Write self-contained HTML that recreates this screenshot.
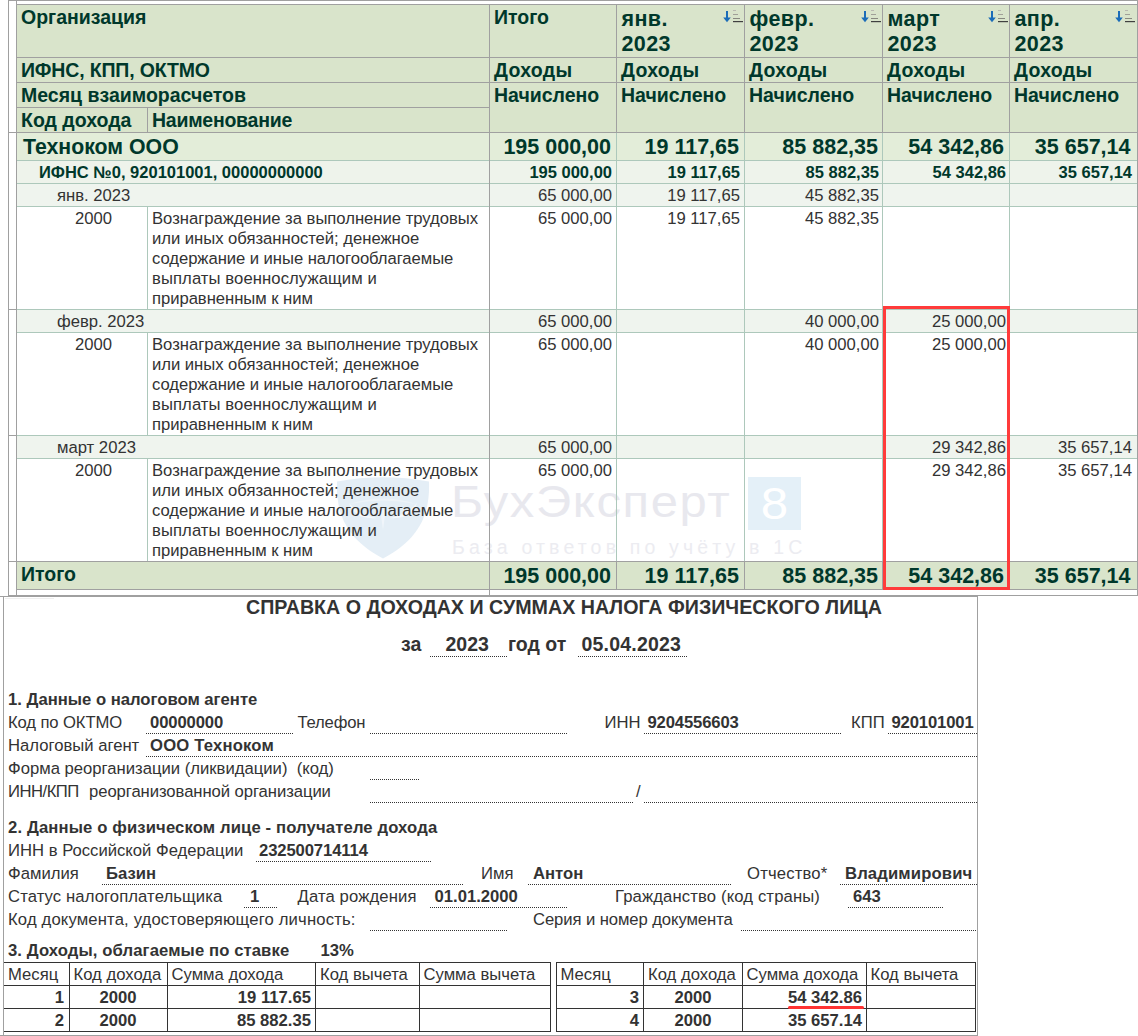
<!DOCTYPE html>
<html><head><meta charset="utf-8"><style>
html,body{margin:0;padding:0;background:#fff;width:1138px;height:1036px;overflow:hidden;position:relative}
body>div,body>svg{position:absolute;box-sizing:content-box}
.t{font-family:"Liberation Sans", sans-serif;white-space:nowrap}
</style></head><body>
<div style="left:8px;top:0px;width:1130px;height:1px;background:#a0a0a0"></div>
<div style="left:8px;top:0px;width:1px;height:596px;background:#a0a0a0"></div>
<div style="left:1137px;top:0px;width:1px;height:596px;background:#a0a0a0"></div>
<div style="left:17px;top:5px;width:1120px;height:127px;background:#d9e4cb"></div>
<div style="left:16px;top:4px;width:1121px;height:1px;background:#a0a0a0"></div>
<div style="left:16px;top:57px;width:1121px;height:1px;background:#a0a0a0"></div>
<div style="left:16px;top:82px;width:1121px;height:1px;background:#a0a0a0"></div>
<div style="left:16px;top:107px;width:473px;height:1px;background:#a0a0a0"></div>
<div style="left:8px;top:132px;width:1129px;height:1px;background:#a0a0a0"></div>
<div style="left:16px;top:0px;width:1px;height:596px;background:#a0a0a0"></div>
<div style="left:489px;top:4px;width:1px;height:129px;background:#a0a0a0"></div>
<div style="left:616px;top:4px;width:1px;height:129px;background:#a0a0a0"></div>
<div style="left:744px;top:4px;width:1px;height:129px;background:#a0a0a0"></div>
<div style="left:882px;top:4px;width:1px;height:129px;background:#a0a0a0"></div>
<div style="left:1009px;top:4px;width:1px;height:129px;background:#a0a0a0"></div>
<div style="left:147px;top:107px;width:1px;height:26px;background:#a0a0a0"></div>
<div style="left:17px;top:133px;width:1120px;height:27px;background:#e3edd9"></div>
<div style="left:17px;top:161px;width:1120px;height:22px;background:#eef3eb"></div>
<div style="left:17px;top:184px;width:1120px;height:22px;background:#eff4ee"></div>
<div style="left:17px;top:207px;width:1120px;height:102px;background:#fff"></div>
<div style="left:17px;top:310px;width:1120px;height:22px;background:#eff4ee"></div>
<div style="left:17px;top:333px;width:1120px;height:102px;background:#fff"></div>
<div style="left:17px;top:436px;width:1120px;height:22px;background:#eff4ee"></div>
<div style="left:17px;top:459px;width:1120px;height:102px;background:#fff"></div>
<svg style="left:336px;top:476px" width="96" height="86" viewBox="0 0 96 86"><path d="M1 5.6 Q47 -3 93 5.6 C94 35 86 62 47 82.5 C8 62 0 35 1 5.6 Z" fill="#e4eef6"/><path d="M13 27 Q19 44 41 42 Q23 39 13 27 Z" fill="#f5f9fc"/><path d="M81 27 Q75 44 53 42 Q71 39 81 27 Z" fill="#f5f9fc"/><path d="M14 28 Q47 17 80 28 Q47 21 14 28 Z" fill="#edf3f8"/><path d="M44.5 36 Q47 30 49.5 36 L47 54 Z" fill="#f0f5fa"/></svg>
<div class="t" style="left:451px;top:472px;font-size:44.5px;line-height:60px;letter-spacing:1.5px;color:#e8e8ee;transform:scaleX(1.1);transform-origin:0 0">БухЭксперт</div>
<div style="left:748px;top:477px;width:53px;height:53px;background:#e4f0f8"></div>
<div class="t" style="left:748px;top:474px;width:53px;text-align:center;font-size:44px;line-height:60px;color:#fff;transform:scaleX(1.12)">8</div>
<div class="t" style="left:452px;top:537px;font-size:19.5px;line-height:20px;letter-spacing:4.16px;color:#ececf1">База ответов по учёту в 1С</div>
<div style="left:17px;top:160px;width:1120px;height:1px;background:#adc8bb"></div>
<div style="left:17px;top:183px;width:1120px;height:1px;background:#adc8bb"></div>
<div style="left:17px;top:206px;width:1120px;height:1px;background:#adc8bb"></div>
<div style="left:17px;top:309px;width:1120px;height:1px;background:#adc8bb"></div>
<div style="left:17px;top:332px;width:1120px;height:1px;background:#adc8bb"></div>
<div style="left:17px;top:435px;width:1120px;height:1px;background:#adc8bb"></div>
<div style="left:17px;top:458px;width:1120px;height:1px;background:#adc8bb"></div>
<div style="left:8px;top:309px;width:9px;height:1px;background:#a0a0a0"></div>
<div style="left:8px;top:435px;width:9px;height:1px;background:#a0a0a0"></div>
<div style="left:616px;top:133px;width:1px;height:428px;background:#adc8bb"></div>
<div style="left:744px;top:133px;width:1px;height:428px;background:#adc8bb"></div>
<div style="left:882px;top:133px;width:1px;height:428px;background:#adc8bb"></div>
<div style="left:1009px;top:133px;width:1px;height:428px;background:#adc8bb"></div>
<div style="left:489px;top:133px;width:1px;height:428px;background:#a0a0a0"></div>
<div style="left:147px;top:207px;width:1px;height:102px;background:#adc8bb"></div>
<div style="left:147px;top:333px;width:1px;height:102px;background:#adc8bb"></div>
<div style="left:147px;top:459px;width:1px;height:102px;background:#adc8bb"></div>
<div style="left:17px;top:562px;width:1120px;height:27px;background:#d9e4cb"></div>
<div style="left:8px;top:561px;width:1129px;height:1px;background:#a0a0a0"></div>
<div style="left:16px;top:589px;width:1121px;height:1px;background:#a0a0a0"></div>
<div style="left:489px;top:562px;width:1px;height:27px;background:#a0a0a0"></div>
<div style="left:616px;top:562px;width:1px;height:27px;background:#a0a0a0"></div>
<div style="left:744px;top:562px;width:1px;height:27px;background:#a0a0a0"></div>
<div style="left:882px;top:562px;width:1px;height:27px;background:#a0a0a0"></div>
<div style="left:1009px;top:562px;width:1px;height:27px;background:#a0a0a0"></div>
<div style="left:489px;top:590px;width:1px;height:5px;background:#a0a0a0"></div>
<div style="left:8px;top:595px;width:1130px;height:1px;background:#a0a0a0"></div>
<div style="left:0px;top:596px;width:978px;height:1px;background:#a0a0a0"></div>
<div style="left:5px;top:598px;width:49px;height:1px;background:#efefef"></div>
<div class="t" style="left:21px;top:8.49px;font-size:19.5px;line-height:19.5px;font-weight:bold;color:#00382b;">Организация</div>
<div class="t" style="left:494px;top:8.49px;font-size:19.5px;line-height:19.5px;font-weight:bold;color:#00382b;">Итого</div>
<div class="t" style="left:621.5px;top:8.80px;font-size:21.5px;line-height:21.5px;font-weight:bold;color:#00382b;letter-spacing:0.4px">янв.</div>
<div class="t" style="left:621.5px;top:33.80px;font-size:21.5px;line-height:21.5px;font-weight:bold;color:#00382b;letter-spacing:0.4px">2023</div>
<div class="t" style="left:749.5px;top:8.80px;font-size:21.5px;line-height:21.5px;font-weight:bold;color:#00382b;letter-spacing:0.4px">февр.</div>
<div class="t" style="left:749.5px;top:33.80px;font-size:21.5px;line-height:21.5px;font-weight:bold;color:#00382b;letter-spacing:0.4px">2023</div>
<div class="t" style="left:887.5px;top:8.80px;font-size:21.5px;line-height:21.5px;font-weight:bold;color:#00382b;letter-spacing:0.4px">март</div>
<div class="t" style="left:887.5px;top:33.80px;font-size:21.5px;line-height:21.5px;font-weight:bold;color:#00382b;letter-spacing:0.4px">2023</div>
<div class="t" style="left:1014.5px;top:8.80px;font-size:21.5px;line-height:21.5px;font-weight:bold;color:#00382b;letter-spacing:0.4px">апр.</div>
<div class="t" style="left:1014.5px;top:33.80px;font-size:21.5px;line-height:21.5px;font-weight:bold;color:#00382b;letter-spacing:0.4px">2023</div>
<div class="t" style="left:21px;top:61.49px;font-size:19.5px;line-height:19.5px;font-weight:bold;color:#00382b;letter-spacing:-0.16px">ИФНС, КПП, ОКТМО</div>
<div class="t" style="left:21px;top:86.49px;font-size:19.5px;line-height:19.5px;font-weight:bold;color:#00382b;">Месяц взаиморасчетов</div>
<div class="t" style="left:21px;top:111.49px;font-size:19.5px;line-height:19.5px;font-weight:bold;color:#00382b;">Код дохода</div>
<div class="t" style="left:152px;top:111.49px;font-size:19.5px;line-height:19.5px;font-weight:bold;color:#00382b;letter-spacing:-0.25px">Наименование</div>
<div class="t" style="left:494px;top:61.49px;font-size:19.5px;line-height:19.5px;font-weight:bold;color:#00382b;letter-spacing:0.3px">Доходы</div>
<div class="t" style="left:494px;top:86.49px;font-size:19.5px;line-height:19.5px;font-weight:bold;color:#00382b;">Начислено</div>
<div class="t" style="left:621px;top:61.49px;font-size:19.5px;line-height:19.5px;font-weight:bold;color:#00382b;letter-spacing:0.3px">Доходы</div>
<div class="t" style="left:621px;top:86.49px;font-size:19.5px;line-height:19.5px;font-weight:bold;color:#00382b;">Начислено</div>
<div class="t" style="left:749px;top:61.49px;font-size:19.5px;line-height:19.5px;font-weight:bold;color:#00382b;letter-spacing:0.3px">Доходы</div>
<div class="t" style="left:749px;top:86.49px;font-size:19.5px;line-height:19.5px;font-weight:bold;color:#00382b;">Начислено</div>
<div class="t" style="left:887px;top:61.49px;font-size:19.5px;line-height:19.5px;font-weight:bold;color:#00382b;letter-spacing:0.3px">Доходы</div>
<div class="t" style="left:887px;top:86.49px;font-size:19.5px;line-height:19.5px;font-weight:bold;color:#00382b;">Начислено</div>
<div class="t" style="left:1014px;top:61.49px;font-size:19.5px;line-height:19.5px;font-weight:bold;color:#00382b;letter-spacing:0.3px">Доходы</div>
<div class="t" style="left:1014px;top:86.49px;font-size:19.5px;line-height:19.5px;font-weight:bold;color:#00382b;">Начислено</div>
<svg style="position:absolute;left:723px;top:9px" width="22" height="14" viewBox="0 0 22 14"><rect x="3" y="2" width="2" height="8" fill="#1b6cb8"/><path d="M0.2 8.5 L4 13.2 L7.8 8.5 Z" fill="#1b6cb8"/><rect x="10" y="1" width="3" height="1" fill="#b8b8b0"/><rect x="10" y="5" width="5" height="1" fill="#a0a098"/><rect x="10" y="9" width="7" height="1" fill="#888880"/><rect x="10" y="12" width="10" height="1.2" fill="#404040"/></svg>
<svg style="position:absolute;left:861px;top:9px" width="22" height="14" viewBox="0 0 22 14"><rect x="3" y="2" width="2" height="8" fill="#1b6cb8"/><path d="M0.2 8.5 L4 13.2 L7.8 8.5 Z" fill="#1b6cb8"/><rect x="10" y="1" width="3" height="1" fill="#b8b8b0"/><rect x="10" y="5" width="5" height="1" fill="#a0a098"/><rect x="10" y="9" width="7" height="1" fill="#888880"/><rect x="10" y="12" width="10" height="1.2" fill="#404040"/></svg>
<svg style="position:absolute;left:988px;top:9px" width="22" height="14" viewBox="0 0 22 14"><rect x="3" y="2" width="2" height="8" fill="#1b6cb8"/><path d="M0.2 8.5 L4 13.2 L7.8 8.5 Z" fill="#1b6cb8"/><rect x="10" y="1" width="3" height="1" fill="#b8b8b0"/><rect x="10" y="5" width="5" height="1" fill="#a0a098"/><rect x="10" y="9" width="7" height="1" fill="#888880"/><rect x="10" y="12" width="10" height="1.2" fill="#404040"/></svg>
<svg style="position:absolute;left:1115px;top:9px" width="22" height="14" viewBox="0 0 22 14"><rect x="3" y="2" width="2" height="8" fill="#1b6cb8"/><path d="M0.2 8.5 L4 13.2 L7.8 8.5 Z" fill="#1b6cb8"/><rect x="10" y="1" width="3" height="1" fill="#b8b8b0"/><rect x="10" y="5" width="5" height="1" fill="#a0a098"/><rect x="10" y="9" width="7" height="1" fill="#888880"/><rect x="10" y="12" width="10" height="1.2" fill="#404040"/></svg>
<div class="t" style="left:23px;top:136.97px;font-size:21.3px;line-height:21.3px;font-weight:bold;color:#00382b;">Техноком ООО</div>
<div class="t" style="right:527px;top:136.80px;font-size:21.5px;line-height:21.5px;font-weight:bold;color:#00382b;">195 000,00</div>
<div class="t" style="right:399px;top:136.80px;font-size:21.5px;line-height:21.5px;font-weight:bold;color:#00382b;">19 117,65</div>
<div class="t" style="right:260px;top:136.80px;font-size:21.5px;line-height:21.5px;font-weight:bold;color:#00382b;">85 882,35</div>
<div class="t" style="right:134px;top:136.80px;font-size:21.5px;line-height:21.5px;font-weight:bold;color:#00382b;">54 342,86</div>
<div class="t" style="right:7.5px;top:136.80px;font-size:21.5px;line-height:21.5px;font-weight:bold;color:#00382b;">35 657,14</div>
<div class="t" style="left:39px;top:164.03px;font-size:16.5px;line-height:16.5px;font-weight:bold;color:#00382b;">ИФНС №0, 920101001, 00000000000</div>
<div class="t" style="right:526px;top:164.03px;font-size:16.5px;line-height:16.5px;font-weight:bold;color:#00382b;">195 000,00</div>
<div class="t" style="right:398px;top:164.03px;font-size:16.5px;line-height:16.5px;font-weight:bold;color:#00382b;">19 117,65</div>
<div class="t" style="right:259px;top:164.03px;font-size:16.5px;line-height:16.5px;font-weight:bold;color:#00382b;">85 882,35</div>
<div class="t" style="right:132px;top:164.03px;font-size:16.5px;line-height:16.5px;font-weight:bold;color:#00382b;">54 342,86</div>
<div class="t" style="right:6px;top:164.03px;font-size:16.5px;line-height:16.5px;font-weight:bold;color:#00382b;">35 657,14</div>
<div class="t" style="left:57px;top:187.89px;font-size:16.67px;line-height:16.67px;font-weight:normal;color:#333333;">янв. 2023</div>
<div class="t" style="right:526px;top:187.89px;font-size:16.67px;line-height:16.67px;font-weight:normal;color:#333333;">65 000,00</div>
<div class="t" style="right:398px;top:187.89px;font-size:16.67px;line-height:16.67px;font-weight:normal;color:#333333;">19 117,65</div>
<div class="t" style="right:259px;top:187.89px;font-size:16.67px;line-height:16.67px;font-weight:normal;color:#333333;">45 882,35</div>
<div class="t" style="left:75px;top:210.89px;font-size:16.67px;line-height:16.67px;font-weight:normal;color:#333333;">2000</div>
<div class="t" style="left:152px;top:210.89px;font-size:16.67px;line-height:16.67px;font-weight:normal;color:#333333;letter-spacing:-0.02px">Вознаграждение за выполнение трудовых</div>
<div class="t" style="left:152px;top:230.89px;font-size:16.67px;line-height:16.67px;font-weight:normal;color:#333333;letter-spacing:-0.03px">или иных обязанностей; денежное</div>
<div class="t" style="left:152px;top:250.89px;font-size:16.67px;line-height:16.67px;font-weight:normal;color:#333333;letter-spacing:-0.06px">содержание и иные налогооблагаемые</div>
<div class="t" style="left:152px;top:270.89px;font-size:16.67px;line-height:16.67px;font-weight:normal;color:#333333;letter-spacing:0.08px">выплаты военнослужащим и</div>
<div class="t" style="left:152px;top:290.89px;font-size:16.67px;line-height:16.67px;font-weight:normal;color:#333333;letter-spacing:-0.05px">приравненным к ним</div>
<div class="t" style="right:526px;top:210.89px;font-size:16.67px;line-height:16.67px;font-weight:normal;color:#333333;">65 000,00</div>
<div class="t" style="right:398px;top:210.89px;font-size:16.67px;line-height:16.67px;font-weight:normal;color:#333333;">19 117,65</div>
<div class="t" style="right:259px;top:210.89px;font-size:16.67px;line-height:16.67px;font-weight:normal;color:#333333;">45 882,35</div>
<div class="t" style="left:57px;top:313.89px;font-size:16.67px;line-height:16.67px;font-weight:normal;color:#333333;">февр. 2023</div>
<div class="t" style="right:526px;top:313.89px;font-size:16.67px;line-height:16.67px;font-weight:normal;color:#333333;">65 000,00</div>
<div class="t" style="right:259px;top:313.89px;font-size:16.67px;line-height:16.67px;font-weight:normal;color:#333333;">40 000,00</div>
<div class="t" style="right:132px;top:313.89px;font-size:16.67px;line-height:16.67px;font-weight:normal;color:#333333;">25 000,00</div>
<div class="t" style="left:75px;top:336.89px;font-size:16.67px;line-height:16.67px;font-weight:normal;color:#333333;">2000</div>
<div class="t" style="left:152px;top:336.89px;font-size:16.67px;line-height:16.67px;font-weight:normal;color:#333333;letter-spacing:-0.02px">Вознаграждение за выполнение трудовых</div>
<div class="t" style="left:152px;top:356.89px;font-size:16.67px;line-height:16.67px;font-weight:normal;color:#333333;letter-spacing:-0.03px">или иных обязанностей; денежное</div>
<div class="t" style="left:152px;top:376.89px;font-size:16.67px;line-height:16.67px;font-weight:normal;color:#333333;letter-spacing:-0.06px">содержание и иные налогооблагаемые</div>
<div class="t" style="left:152px;top:396.89px;font-size:16.67px;line-height:16.67px;font-weight:normal;color:#333333;letter-spacing:0.08px">выплаты военнослужащим и</div>
<div class="t" style="left:152px;top:416.89px;font-size:16.67px;line-height:16.67px;font-weight:normal;color:#333333;letter-spacing:-0.05px">приравненным к ним</div>
<div class="t" style="right:526px;top:336.89px;font-size:16.67px;line-height:16.67px;font-weight:normal;color:#333333;">65 000,00</div>
<div class="t" style="right:259px;top:336.89px;font-size:16.67px;line-height:16.67px;font-weight:normal;color:#333333;">40 000,00</div>
<div class="t" style="right:132px;top:336.89px;font-size:16.67px;line-height:16.67px;font-weight:normal;color:#333333;">25 000,00</div>
<div class="t" style="left:57px;top:439.89px;font-size:16.67px;line-height:16.67px;font-weight:normal;color:#333333;">март 2023</div>
<div class="t" style="right:526px;top:439.89px;font-size:16.67px;line-height:16.67px;font-weight:normal;color:#333333;">65 000,00</div>
<div class="t" style="right:132px;top:439.89px;font-size:16.67px;line-height:16.67px;font-weight:normal;color:#333333;">29 342,86</div>
<div class="t" style="right:6px;top:439.89px;font-size:16.67px;line-height:16.67px;font-weight:normal;color:#333333;">35 657,14</div>
<div class="t" style="left:75px;top:462.89px;font-size:16.67px;line-height:16.67px;font-weight:normal;color:#333333;">2000</div>
<div class="t" style="left:152px;top:462.89px;font-size:16.67px;line-height:16.67px;font-weight:normal;color:#333333;letter-spacing:-0.02px">Вознаграждение за выполнение трудовых</div>
<div class="t" style="left:152px;top:482.89px;font-size:16.67px;line-height:16.67px;font-weight:normal;color:#333333;letter-spacing:-0.03px">или иных обязанностей; денежное</div>
<div class="t" style="left:152px;top:502.89px;font-size:16.67px;line-height:16.67px;font-weight:normal;color:#333333;letter-spacing:-0.06px">содержание и иные налогооблагаемые</div>
<div class="t" style="left:152px;top:522.89px;font-size:16.67px;line-height:16.67px;font-weight:normal;color:#333333;letter-spacing:0.08px">выплаты военнослужащим и</div>
<div class="t" style="left:152px;top:542.89px;font-size:16.67px;line-height:16.67px;font-weight:normal;color:#333333;letter-spacing:-0.05px">приравненным к ним</div>
<div class="t" style="right:526px;top:462.89px;font-size:16.67px;line-height:16.67px;font-weight:normal;color:#333333;">65 000,00</div>
<div class="t" style="right:132px;top:462.89px;font-size:16.67px;line-height:16.67px;font-weight:normal;color:#333333;">29 342,86</div>
<div class="t" style="right:6px;top:462.89px;font-size:16.67px;line-height:16.67px;font-weight:normal;color:#333333;">35 657,14</div>
<div class="t" style="left:21px;top:565.49px;font-size:19.5px;line-height:19.5px;font-weight:bold;color:#00382b;">Итого</div>
<div class="t" style="right:527px;top:565.80px;font-size:21.5px;line-height:21.5px;font-weight:bold;color:#00382b;">195 000,00</div>
<div class="t" style="right:399px;top:565.80px;font-size:21.5px;line-height:21.5px;font-weight:bold;color:#00382b;">19 117,65</div>
<div class="t" style="right:260px;top:565.80px;font-size:21.5px;line-height:21.5px;font-weight:bold;color:#00382b;">85 882,35</div>
<div class="t" style="right:134px;top:565.80px;font-size:21.5px;line-height:21.5px;font-weight:bold;color:#00382b;">54 342,86</div>
<div class="t" style="right:7.5px;top:565.80px;font-size:21.5px;line-height:21.5px;font-weight:bold;color:#00382b;">35 657,14</div>
<div style="left:883px;top:306px;width:121px;height:278px;border:3px solid #ff3b3b"></div>
<div style="left:3px;top:597px;width:1px;height:439px;background:#a0a0a0"></div>
<div style="left:977px;top:597px;width:1px;height:439px;background:#a0a0a0"></div>
<div style="left:0px;top:1035px;width:978px;height:1px;background:#a0a0a0"></div>
<div class="t" style="left:246px;top:598.35px;font-size:19.67px;line-height:19.67px;font-weight:bold;color:#333333;">СПРАВКА О ДОХОДАХ И СУММАХ НАЛОГА ФИЗИЧЕСКОГО ЛИЦА</div>
<div class="t" style="left:401px;top:635.49px;font-size:19.5px;line-height:19.5px;font-weight:bold;color:#333333;">за</div>
<div class="t" style="left:445.5px;top:635.49px;font-size:19.5px;line-height:19.5px;font-weight:bold;color:#333333;">2023</div>
<div class="t" style="left:508px;top:635.49px;font-size:19.5px;line-height:19.5px;font-weight:bold;color:#333333;">год от</div>
<div class="t" style="left:581.5px;top:635.49px;font-size:19.5px;line-height:19.5px;font-weight:bold;color:#333333;letter-spacing:0.2px">05.04.2023</div>
<div style="left:430px;top:656px;width:78px;height:1px;background:repeating-linear-gradient(to right,#333 0 1px,transparent 1px 2px)"></div>
<div style="left:578px;top:656px;width:109px;height:1px;background:repeating-linear-gradient(to right,#333 0 1px,transparent 1px 2px)"></div>
<div class="t" style="left:8px;top:691.89px;font-size:16.67px;line-height:16.67px;font-weight:bold;color:#333333;">1. Данные о налоговом агенте</div>
<div class="t" style="left:8px;top:714.89px;font-size:16.67px;line-height:16.67px;font-weight:normal;color:#333333;letter-spacing:-0.12px">Код по ОКТМО</div>
<div class="t" style="left:150px;top:714.89px;font-size:16.67px;line-height:16.67px;font-weight:bold;color:#333333;letter-spacing:-0.13px">00000000</div>
<div style="left:146px;top:733px;width:148px;height:1px;background:repeating-linear-gradient(to right,#333 0 1px,transparent 1px 2px)"></div>
<div class="t" style="left:297.5px;top:714.89px;font-size:16.67px;line-height:16.67px;font-weight:normal;color:#333333;letter-spacing:-0.2px">Телефон</div>
<div style="left:370px;top:733px;width:198px;height:1px;background:repeating-linear-gradient(to right,#333 0 1px,transparent 1px 2px)"></div>
<div class="t" style="left:604.5px;top:714.89px;font-size:16.67px;line-height:16.67px;font-weight:normal;color:#333333;">ИНН</div>
<div class="t" style="left:647.5px;top:714.89px;font-size:16.67px;line-height:16.67px;font-weight:bold;color:#333333;letter-spacing:-0.15px">9204556603</div>
<div style="left:644px;top:733px;width:198px;height:1px;background:repeating-linear-gradient(to right,#333 0 1px,transparent 1px 2px)"></div>
<div class="t" style="left:851px;top:714.89px;font-size:16.67px;line-height:16.67px;font-weight:normal;color:#333333;">КПП</div>
<div class="t" style="left:891.5px;top:714.89px;font-size:16.67px;line-height:16.67px;font-weight:bold;color:#333333;letter-spacing:-0.15px">920101001</div>
<div style="left:888px;top:733px;width:89px;height:1px;background:repeating-linear-gradient(to right,#333 0 1px,transparent 1px 2px)"></div>
<div class="t" style="left:8px;top:737.89px;font-size:16.67px;line-height:16.67px;font-weight:normal;color:#333333;">Налоговый агент</div>
<div class="t" style="left:150px;top:737.89px;font-size:16.67px;line-height:16.67px;font-weight:bold;color:#333333;letter-spacing:0.18px">ООО Техноком</div>
<div style="left:146px;top:756px;width:831px;height:1px;background:repeating-linear-gradient(to right,#333 0 1px,transparent 1px 2px)"></div>
<div class="t" style="left:8px;top:760.89px;font-size:16.67px;line-height:16.67px;font-weight:normal;color:#333333;">Форма реорганизации (ликвидации)&nbsp; (код)</div>
<div style="left:370px;top:779px;width:50px;height:1px;background:repeating-linear-gradient(to right,#333 0 1px,transparent 1px 2px)"></div>
<div class="t" style="left:8px;top:783.89px;font-size:16.67px;line-height:16.67px;font-weight:normal;color:#333333;letter-spacing:-0.5px">ИНН/КПП</div>
<div class="t" style="left:89px;top:783.89px;font-size:16.67px;line-height:16.67px;font-weight:normal;color:#333333;letter-spacing:-0.07px">реорганизованной организации</div>
<div style="left:370px;top:802px;width:264px;height:1px;background:repeating-linear-gradient(to right,#333 0 1px,transparent 1px 2px)"></div>
<div class="t" style="left:636px;top:783.89px;font-size:16.67px;line-height:16.67px;font-weight:normal;color:#333333;">/</div>
<div style="left:644px;top:802px;width:333px;height:1px;background:repeating-linear-gradient(to right,#333 0 1px,transparent 1px 2px)"></div>
<div class="t" style="left:8px;top:819.89px;font-size:16.67px;line-height:16.67px;font-weight:bold;color:#333333;letter-spacing:0.13px">2. Данные о физическом лице - получателе дохода</div>
<div class="t" style="left:8px;top:842.89px;font-size:16.67px;line-height:16.67px;font-weight:normal;color:#333333;">ИНН в Российской Федерации</div>
<div class="t" style="left:259px;top:842.89px;font-size:16.67px;line-height:16.67px;font-weight:bold;color:#333333;letter-spacing:-0.12px">232500714114</div>
<div style="left:256px;top:861px;width:176px;height:1px;background:repeating-linear-gradient(to right,#333 0 1px,transparent 1px 2px)"></div>
<div class="t" style="left:8px;top:865.89px;font-size:16.67px;line-height:16.67px;font-weight:normal;color:#333333;">Фамилия</div>
<div class="t" style="left:106px;top:865.89px;font-size:16.67px;line-height:16.67px;font-weight:bold;color:#333333;">Базин</div>
<div style="left:102px;top:884px;width:361px;height:1px;background:repeating-linear-gradient(to right,#333 0 1px,transparent 1px 2px)"></div>
<div class="t" style="left:481px;top:865.89px;font-size:16.67px;line-height:16.67px;font-weight:normal;color:#333333;">Имя</div>
<div class="t" style="left:533px;top:865.89px;font-size:16.67px;line-height:16.67px;font-weight:bold;color:#333333;">Антон</div>
<div style="left:528px;top:884px;width:204px;height:1px;background:repeating-linear-gradient(to right,#333 0 1px,transparent 1px 2px)"></div>
<div class="t" style="left:747px;top:865.89px;font-size:16.67px;line-height:16.67px;font-weight:normal;color:#333333;letter-spacing:0.17px">Отчество*</div>
<div class="t" style="left:845px;top:865.89px;font-size:16.67px;line-height:16.67px;font-weight:bold;color:#333333;letter-spacing:0.13px">Владимирович</div>
<div style="left:840px;top:884px;width:137px;height:1px;background:repeating-linear-gradient(to right,#333 0 1px,transparent 1px 2px)"></div>
<div class="t" style="left:8px;top:888.89px;font-size:16.67px;line-height:16.67px;font-weight:normal;color:#333333;letter-spacing:0.1px">Статус налогоплательщика</div>
<div class="t" style="left:250px;top:888.89px;font-size:16.67px;line-height:16.67px;font-weight:bold;color:#333333;">1</div>
<div style="left:244px;top:907px;width:34px;height:1px;background:repeating-linear-gradient(to right,#333 0 1px,transparent 1px 2px)"></div>
<div class="t" style="left:297.5px;top:888.89px;font-size:16.67px;line-height:16.67px;font-weight:normal;color:#333333;letter-spacing:0.12px">Дата рождения</div>
<div class="t" style="left:434.5px;top:888.89px;font-size:16.67px;line-height:16.67px;font-weight:bold;color:#333333;">01.01.2000</div>
<div style="left:430px;top:907px;width:138px;height:1px;background:repeating-linear-gradient(to right,#333 0 1px,transparent 1px 2px)"></div>
<div class="t" style="left:615px;top:888.89px;font-size:16.67px;line-height:16.67px;font-weight:normal;color:#333333;letter-spacing:0.13px">Гражданство (код страны)</div>
<div class="t" style="left:853px;top:888.89px;font-size:16.67px;line-height:16.67px;font-weight:bold;color:#333333;">643</div>
<div style="left:848px;top:907px;width:96px;height:1px;background:repeating-linear-gradient(to right,#333 0 1px,transparent 1px 2px)"></div>
<div class="t" style="left:8px;top:911.89px;font-size:16.67px;line-height:16.67px;font-weight:normal;color:#333333;letter-spacing:0.15px">Код документа, удостоверяющего личность:</div>
<div style="left:370px;top:930px;width:138px;height:1px;background:repeating-linear-gradient(to right,#333 0 1px,transparent 1px 2px)"></div>
<div class="t" style="left:533px;top:911.89px;font-size:16.67px;line-height:16.67px;font-weight:normal;color:#333333;letter-spacing:-0.09px">Серия и номер документа</div>
<div style="left:741px;top:930px;width:236px;height:1px;background:repeating-linear-gradient(to right,#333 0 1px,transparent 1px 2px)"></div>
<div class="t" style="left:8px;top:942.89px;font-size:16.67px;line-height:16.67px;font-weight:bold;color:#333333;letter-spacing:0.1px">3. Доходы, облагаемые по ставке</div>
<div class="t" style="left:320.5px;top:942.89px;font-size:16.67px;line-height:16.67px;font-weight:bold;color:#333333;">13%</div>
<div style="left:4px;top:962px;width:547px;height:1px;background:#333333"></div>
<div style="left:4px;top:985px;width:547px;height:1px;background:#333333"></div>
<div style="left:4px;top:1008px;width:547px;height:1px;background:#333333"></div>
<div style="left:4px;top:1031px;width:547px;height:1px;background:#333333"></div>
<div style="left:69px;top:962px;width:1px;height:70px;background:#333333"></div>
<div style="left:167px;top:962px;width:1px;height:70px;background:#333333"></div>
<div style="left:315px;top:962px;width:1px;height:70px;background:#333333"></div>
<div style="left:419px;top:962px;width:1px;height:70px;background:#333333"></div>
<div style="left:550px;top:962px;width:1px;height:70px;background:#333333"></div>
<div style="left:556px;top:962px;width:420px;height:1px;background:#333333"></div>
<div style="left:556px;top:985px;width:420px;height:1px;background:#333333"></div>
<div style="left:556px;top:1008px;width:420px;height:1px;background:#333333"></div>
<div style="left:556px;top:1031px;width:420px;height:1px;background:#333333"></div>
<div style="left:556px;top:962px;width:1px;height:70px;background:#333333"></div>
<div style="left:643px;top:962px;width:1px;height:70px;background:#333333"></div>
<div style="left:742px;top:962px;width:1px;height:70px;background:#333333"></div>
<div style="left:866px;top:962px;width:1px;height:70px;background:#333333"></div>
<div style="left:975px;top:962px;width:1px;height:70px;background:#333333"></div>
<div class="t" style="left:8px;top:966.89px;font-size:16.67px;line-height:16.67px;font-weight:normal;color:#333333;">Месяц</div>
<div class="t" style="left:73.5px;top:966.89px;font-size:16.67px;line-height:16.67px;font-weight:normal;color:#333333;">Код дохода</div>
<div class="t" style="left:171.5px;top:966.89px;font-size:16.67px;line-height:16.67px;font-weight:normal;color:#333333;">Сумма дохода</div>
<div class="t" style="left:320px;top:966.89px;font-size:16.67px;line-height:16.67px;font-weight:normal;color:#333333;">Код вычета</div>
<div class="t" style="left:423.5px;top:966.89px;font-size:16.67px;line-height:16.67px;font-weight:normal;color:#333333;">Сумма вычета</div>
<div class="t" style="left:560.5px;top:966.89px;font-size:16.67px;line-height:16.67px;font-weight:normal;color:#333333;">Месяц</div>
<div class="t" style="left:648px;top:966.89px;font-size:16.67px;line-height:16.67px;font-weight:normal;color:#333333;">Код дохода</div>
<div class="t" style="left:746.5px;top:966.89px;font-size:16.67px;line-height:16.67px;font-weight:normal;color:#333333;">Сумма дохода</div>
<div class="t" style="left:870.5px;top:966.89px;font-size:16.67px;line-height:16.67px;font-weight:normal;color:#333333;">Код вычета</div>
<div class="t" style="right:1074px;top:989.89px;font-size:16.67px;line-height:16.67px;font-weight:bold;color:#333333;">1</div>
<div class="t" style="left:-182px;width:600px;text-align:center;top:989.89px;font-size:16.67px;line-height:16.67px;font-weight:bold;color:#333333;">2000</div>
<div class="t" style="right:827px;top:989.89px;font-size:16.67px;line-height:16.67px;font-weight:bold;color:#333333;">19 117.65</div>
<div class="t" style="right:499px;top:989.89px;font-size:16.67px;line-height:16.67px;font-weight:bold;color:#333333;">3</div>
<div class="t" style="left:393px;width:600px;text-align:center;top:989.89px;font-size:16.67px;line-height:16.67px;font-weight:bold;color:#333333;">2000</div>
<div class="t" style="right:276px;top:989.89px;font-size:16.67px;line-height:16.67px;font-weight:bold;color:#333333;">54 342.86</div>
<div class="t" style="right:1074px;top:1012.89px;font-size:16.67px;line-height:16.67px;font-weight:bold;color:#333333;">2</div>
<div class="t" style="left:-182px;width:600px;text-align:center;top:1012.89px;font-size:16.67px;line-height:16.67px;font-weight:bold;color:#333333;">2000</div>
<div class="t" style="right:827px;top:1012.89px;font-size:16.67px;line-height:16.67px;font-weight:bold;color:#333333;">85 882.35</div>
<div class="t" style="right:499px;top:1012.89px;font-size:16.67px;line-height:16.67px;font-weight:bold;color:#333333;">4</div>
<div class="t" style="left:393px;width:600px;text-align:center;top:1012.89px;font-size:16.67px;line-height:16.67px;font-weight:bold;color:#333333;">2000</div>
<div class="t" style="right:276px;top:1012.89px;font-size:16.67px;line-height:16.67px;font-weight:bold;color:#333333;">35 657.14</div>
<div style="left:788px;top:1006px;width:76px;height:3px;border-radius:2px;background:#ff3333"></div>
</body></html>
